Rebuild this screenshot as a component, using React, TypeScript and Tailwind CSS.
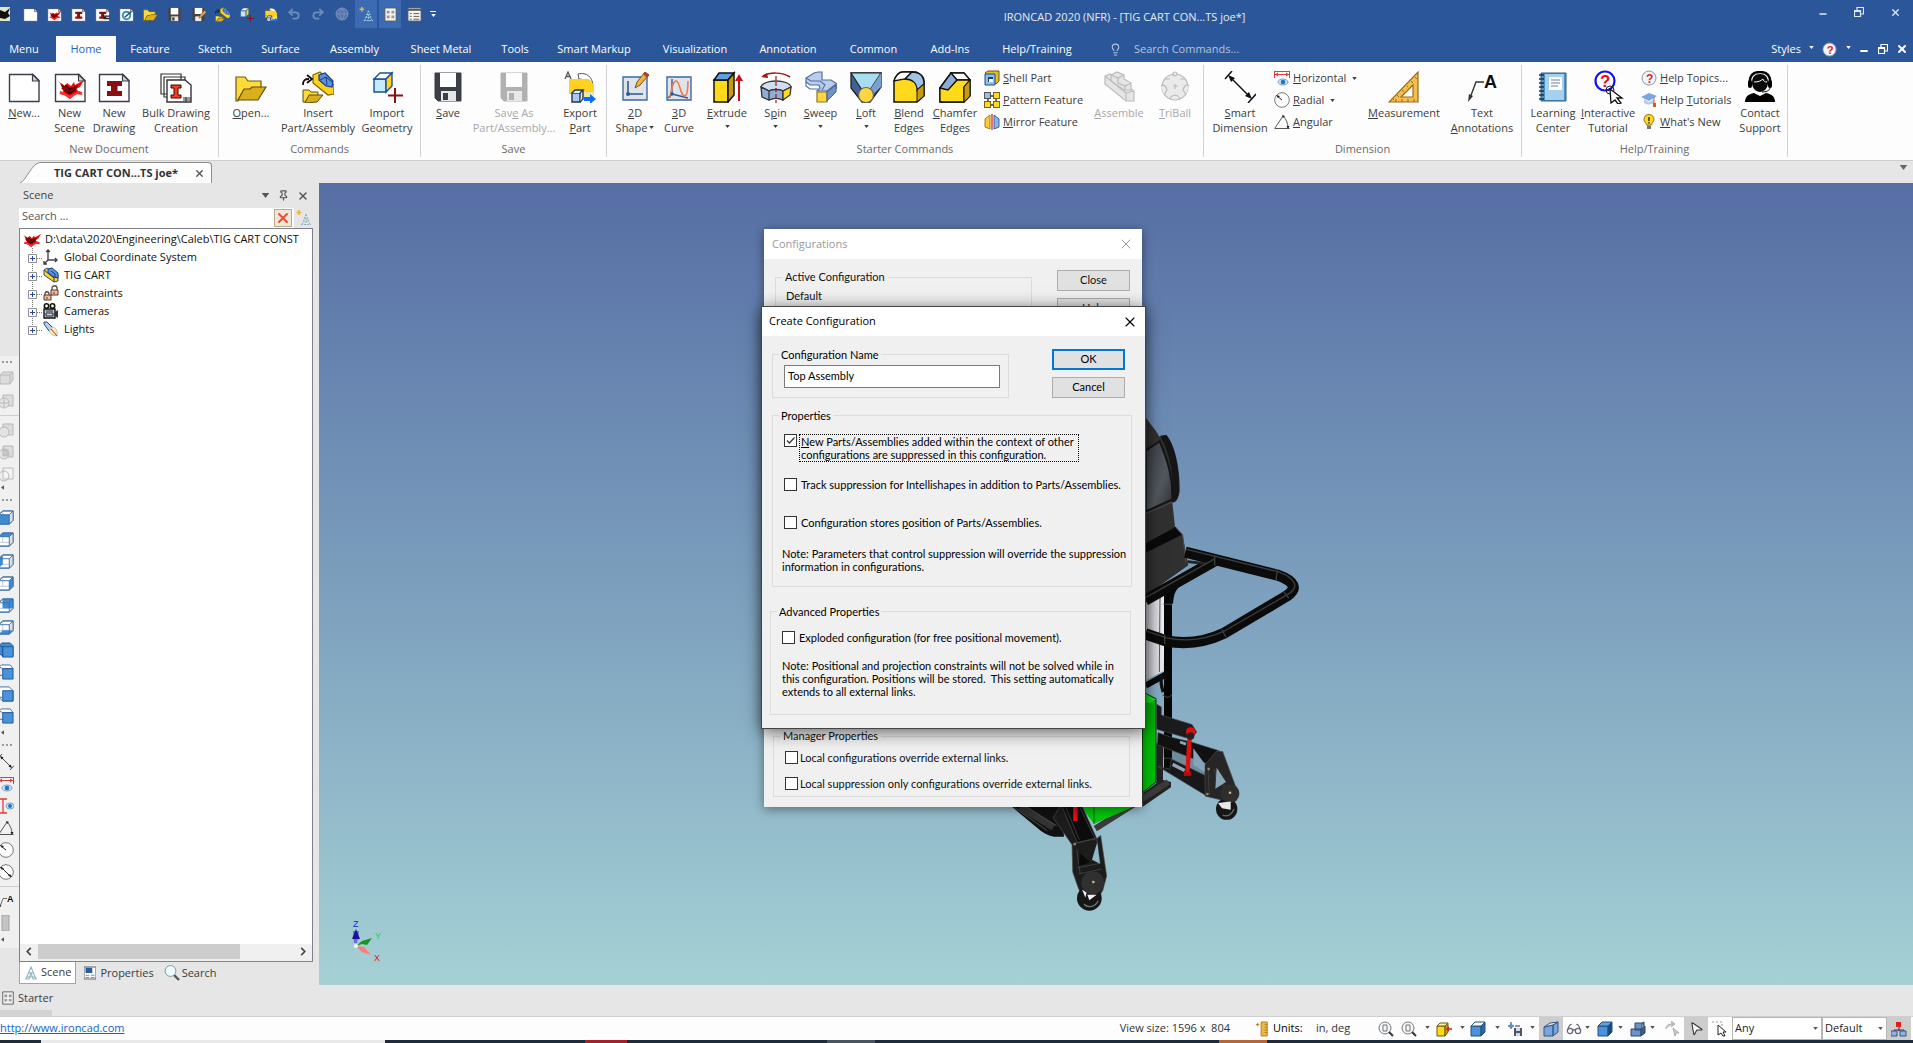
import React from 'react';
import { Lightbulb, X, Minus, Undo2, Redo2, Globe, Pin, MousePointer2, Glasses } from 'lucide-react';
import { clsx } from 'clsx';

// "&" in front of a letter marks the keyboard mnemonic
function Mnemonic({ text }: { text: string }) {
  const at = text.indexOf('&');
  if (at < 0) return <>{text}</>;
  return (
    <>
      {text.slice(0, at)}
      <u>{text[at + 1]}</u>
      {text.slice(at + 2)}
    </>
  );
}

function Caret({ className }: { className?: string }) {
  return (
    <svg viewBox="0 0 6 4" className={clsx('inline-block h-[3px] w-[5px] shrink-0', className)} aria-hidden="true">
      <path d="M0 0h6L3 4z" fill="currentColor" />
    </svg>
  );
}

function Svg({ size = 'w-8 h-8', box = 32, children }: { size?: string; box?: number; children: React.ReactNode }) {
  return (
    <svg viewBox={`0 0 ${box} ${box}`} className={clsx('shrink-0', size)} fill="none" aria-hidden="true">
      {children}
    </svg>
  );
}

type IconProps = { size?: string };

/* ---------- document icons ---------- */

const page = 'M1.5 3.5H25l6 6V30.500H1.500z';

function PageIcon({ size, children }: IconProps & { children?: React.ReactNode }) {
  return (
    <Svg size={size}>
      <path d={page} fill="#fff" stroke="#3a3f4b" strokeWidth="1.4" />
      <path d="M24.500 3.500v6.500H31z" fill="#cfd3d8" stroke="#3a3f4b" strokeWidth="1.200" />
      {children}
    </Svg>
  );
}

function SceneMark() {
  return (
    <>
      <path d="M4 10l7 5 2-3 4 3 3-4 1 3 9-5-4 7-4 2 7 6-7-1-6 5-6-4-5-1 5-3-3-3 3-1z" fill="#e81010" />
      <path d="M6 12l7 5 8-1 3-3-2 7-7 4-5-3z" fill="#8d0000" />
      <path d="M11 14l5 4 5-2M13 21l4 1 4-4" stroke="#300" strokeWidth="1.500" />
      <path d="M6 21l3 1 7 4 9-5 3 1" stroke="#ff3030" strokeWidth="2" />
    </>
  );
}

function BeamMark({ fill = '#8a0f0f' }: { fill?: string }) {
  return <path d="M9 10h15v5h-4.500v5H24v5H9v-5h4v-5H9z" fill={fill} />;
}

function BulkIcon() {
  return (
    <Svg size="w-9 h-8">
      <path d="M1 3h20v20H1zM4 6h21v20H4z" fill="#fff" stroke="#333" strokeWidth="1.200" />
      <path d="M7 9h18l6 5v17H7z" fill="#fff" stroke="#333" strokeWidth="1.400" />
      <path d="M11 14h10v3h-3v7h3v3H11v-3h3v-7h-3z" fill="#f0401e" stroke="#400" />
      <path d="M23 27h8M23 29h8M26 26v5" stroke="#333" />
    </Svg>
  );
}

function FolderIcon({ size }: IconProps) {
  return (
    <Svg size={size}>
      <path d="M1 6h9l3 4h13v9H9L3 30H1z" fill="#ffdb3a" stroke="#6b5a10" strokeWidth="1.200" />
      <path d="M9 18h6l2-2h14L23 29H3z" fill="#d9b01c" stroke="#5d4e0c" strokeWidth="1.200" />
    </Svg>
  );
}

function FloppyIcon({ size, tone = '#3b3f47' }: IconProps & { tone?: string }) {
  return (
    <Svg size={size}>
      <path d="M3 2h26v28H6l-3-3z" fill={tone} stroke={tone} />
      <path d="M8 2h16v14H8z" fill="#fff" />
      <path d="M9 20h15v10H9z" fill="#e6e6e6" />
      <path d="M11 22h5v7h-5z" fill={tone} />
    </Svg>
  );
}

function SaveEditIcon({ size }: IconProps) {
  return (
    <Svg size={size}>
      <path d="M3 2h26v28H6l-3-3z" fill="#454545" />
      <path d="M8 2h16v13H8z" fill="#fff" />
      <path d="M9 20h13v10H9z" fill="#eee" />
      <path d="M17 24l2-6L29 7l4 4-11 11z" fill="#f2a33c" stroke="#444" />
    </Svg>
  );
}

function InsertIcon({ size }: IconProps) {
  return (
    <Svg size={size}>
      <path d="M11 4l7-3 14 13v9l-6 1L11 12z" fill="#ffd21f" stroke="#7a6200" strokeWidth="1.200" />
      <path d="M17 4l6-2 8 8-1 6-6-1-7-6z" fill="#5c93dc" stroke="#123f86" strokeWidth="1.200" />
      <path d="M18 9l6-3 7 6M24 6l1 8" stroke="#123f86" />
      <path d="M1 14c0-5 2-6 6-6M5 4l5 4-5 4" stroke="#111" strokeWidth="1.800" />
      <path d="M1 19h6l2 2h7v4H7l-4 6H1z" fill="#ffdb3a" stroke="#5d4e0c" />
      <path d="M7 24h14l-6 7-12 1z" fill="#d9b01c" stroke="#5d4e0c" />
    </Svg>
  );
}

function ImportIcon({ size }: IconProps) {
  return (
    <Svg size={size}>
      <path d="M3 8h12v13H3z" fill="#c3ecff" stroke="#1d4f9c" strokeWidth="1.400" />
      <path d="M3 8l6-6h12l-6 6z" fill="#fff" stroke="#1d4f9c" strokeWidth="1.400" />
      <path d="M15 8l6-6v13l-6 6z" fill="#ffd21f" stroke="#1d4f9c" strokeWidth="1.400" />
      <path d="M24 17v15M17 24.500h15" stroke="#8a0f0f" strokeWidth="2" />
    </Svg>
  );
}

function ExportIcon({ size }: IconProps) {
  return (
    <Svg size={size}>
      <path d="M1 8l3-7 3 7M2 5.500h4" stroke="#555" strokeWidth="1.300" />
      <path d="M14 3c9-2 14 3 15 11h-6c-1-4-3-6-8-6z" fill="#fff" stroke="#555" />
      <path d="M5 8h20l5 6v15H17V18H5z" fill="#ffd21f" />
      <path d="M5 18h12v5H5z" fill="#ffd21f" />
      <path d="M17 21h13v8H17z" fill="#f3e6a2" />
      <path d="M8 22h8v9H8z" fill="#a9c9f0" stroke="#22344f" strokeWidth="1.400" />
      <path d="M8 22l3-3h8l-3 3M16 31l3-3v-9" fill="#e2effd" stroke="#22344f" strokeWidth="1.400" />
      <path d="M20 26h6v-3l6 5-6 5v-3h-6z" fill="#0a6cff" />
    </Svg>
  );
}

/* ---------- starter command icons ---------- */

function Shape2DIcon() {
  return (
    <Svg>
      <path d="M4 6h24v23H4z" fill="#dfe3ea" stroke="#3c6a9e" strokeWidth="1.400" />
      <path d="M9 10v13h15" stroke="#2f5a94" strokeWidth="1.600" />
      <circle cx="9" cy="23" r="2" fill="#2f5a94" />
      <path d="M16 17l2-6L26 1l4 3-9 10z" fill="#f3b13c" stroke="#73502a" />
      <path d="M24 3l4 4 2-3-4-3z" fill="#a9432e" />
    </Svg>
  );
}

function Curve3DIcon() {
  return (
    <Svg>
      <path d="M4 6h24v23H4z" fill="#dfe3ea" stroke="#3c6a9e" strokeWidth="1.400" />
      <path d="M9 8v15l-4 4M9 23l16 4" stroke="#2f5a94" strokeWidth="1.400" />
      <path d="M7 27C10 7 14 6 17 17s8 12 8-7" stroke="#ef7b4d" strokeWidth="1.600" />
      <circle cx="9" cy="23" r="1.800" fill="#2f5a94" />
    </Svg>
  );
}

function ExtrudeIcon() {
  return (
    <Svg>
      <path d="M3 9h14v22H3z" fill="#ffd91a" stroke="#111" strokeWidth="1.500" />
      <path d="M3 9l5-7h15l-6 7z" fill="#5ea0e0" stroke="#111" strokeWidth="1.500" />
      <path d="M17 9l6-7v22l-6 7z" fill="#c79a10" stroke="#111" strokeWidth="1.500" />
      <path d="M28 30V8" stroke="#cc1010" strokeWidth="2" />
      <path d="M28 3l-4 7h8z" fill="#cc1010" />
    </Svg>
  );
}

function SpinIcon() {
  return (
    <Svg>
      <path d="M1 16c2-8 28-8 30 0l-8 4c-3-2-11-2-14 0z" fill="#cfdcf2" stroke="#333" strokeWidth="1.300" />
      <path d="M1 16l8 4v9l-7-3zM9 20c3-2 11-2 14 0v9c-4-2-10-2-14 0z" fill="#90add8" stroke="#333" strokeWidth="1.300" />
      <path d="M31 16l-8 4v9l7-5z" fill="#ffd91a" stroke="#333" strokeWidth="1.300" />
      <path d="M3 5c7-4 19-4 27 1" stroke="#a01717" strokeWidth="1.500" />
      <path d="M1 6l6-4 1 5z" fill="#a01717" />
      <path d="M16 5v27" stroke="#a01717" strokeWidth="1.200" strokeDasharray="4 2" />
    </Svg>
  );
}

function SweepIcon() {
  return (
    <Svg>
      <path d="M9 2l4-1h4v8h9l6 4-1 5-9 7v-5H12l3-3-1-3H5l-4-3v-4z" fill="#b9cdee" stroke="#5570a0" strokeWidth="1.200" />
      <path d="M1 11v4l4 3h8M1 7l5 3h9l5 4-3 5M31 13l-9 7" stroke="#5570a0" strokeWidth="1.200" />
      <path d="M12 21h10v10H12z" fill="#ffd540" stroke="#8a7a20" strokeWidth="1.200" />
      <path d="M22 21l9-7v7l-9 9z" fill="#6f94cc" stroke="#44608f" />
    </Svg>
  );
}

function LoftIcon() {
  return (
    <Svg>
      <path d="M1 2h30v14L20 31h-8L1 17z" fill="#3f6293" stroke="#222" strokeWidth="1.300" />
      <path d="M1 2h30l-11 17h-8z" fill="#a8dcf0" stroke="#222" strokeWidth="1.200" />
      <path d="M31 2v14l-9 8-2-5z" fill="#7aa0d0" />
      <circle cx="16" cy="24" r="7.500" fill="#ffd540" stroke="#666" strokeWidth="1.200" />
    </Svg>
  );
}

function BlendIcon() {
  return (
    <Svg>
      <path d="M1 10C3 4 6 1 10 1h13c5 2 8 5 8 9v15l-7 6H1z" fill="#ffd91a" stroke="#111" strokeWidth="1.500" />
      <path d="M1 10C3 4 6 1 10 1h9l-7 7z" fill="#fff" stroke="#111" strokeWidth="1.300" />
      <path d="M12 8l7-7c7 0 12 4 12 12l-7 6C24 12 19 8 12 8z" fill="#9fc2e6" stroke="#111" strokeWidth="1.300" />
      <path d="M24 19l7-6v12l-7 6z" fill="#c79a10" stroke="#111" />
    </Svg>
  );
}

function ChamferIcon() {
  return (
    <Svg>
      <path d="M1 17L12 2h13l6 7v16l-6 6H1z" fill="#ffd91a" stroke="#111" strokeWidth="1.500" />
      <path d="M1 17L12 2l6 7-9 9z" fill="#8eabd5" stroke="#111" strokeWidth="1.300" />
      <path d="M12 2h13l6 7H18z" fill="#fff" stroke="#111" strokeWidth="1.300" />
      <path d="M1 17l8 1 9-9h13l-6 7v15H1z" fill="#ffd91a" stroke="#111" strokeWidth="1.300" />
      <path d="M25 16l6-7v16l-6 6z" fill="#c79a10" stroke="#111" />
      <path d="M1 17L12 2l6 7-9 10z" fill="#8eabd5" stroke="#111" strokeWidth="1.300" />
    </Svg>
  );
}

function ShellIcon() {
  return (
    <Svg size="w-4 h-4" box={16}>
      <path d="M1 3l3-2h11v10l-3 3z" fill="#e6bd22" stroke="#665520" />
      <path d="M1 4h10v11H1z" fill="#8fc0ea" stroke="#1d4f7c" />
      <path d="M4 7h5v5H4z" fill="#12436e" />
      <path d="M5 9h4v3H5z" fill="#fff" />
    </Svg>
  );
}

function PatternIcon() {
  return (
    <Svg size="w-4 h-4" box={16}>
      <path d="M6 4h4M4 6v5M12 6v4M6 13h4" stroke="#333" strokeWidth="1.400" />
      <rect x=".5" y=".5" width="6" height="6" fill="#9dbbe4" stroke="#555" />
      <rect x="9.500" y=".5" width="6" height="6" fill="#ffd91a" stroke="#776510" />
      <rect x=".5" y="9.500" width="6" height="6" fill="#ffd91a" stroke="#776510" />
      <rect x="9.500" y="9.500" width="6" height="6" fill="#ffd91a" stroke="#776510" />
    </Svg>
  );
}

function MirrorIcon() {
  return (
    <Svg size="w-4 h-4" box={16}>
      <path d="M6 1L1 5v8l5 2z" fill="#ffc93a" stroke="#a77d18" />
      <path d="M10 1l5 4v8l-5 2z" fill="#8fb3e6" stroke="#3b62a0" />
      <path d="M8 0v16" stroke="#c22" strokeWidth="1.200" />
    </Svg>
  );
}

function AssembleIcon() {
  return (
    <Svg>
      <g fill="#e3e3e3" stroke="#b5b5b5" strokeWidth="1.200">
        <path d="M2 5l5-2 24 17v10h-8L2 13z" />
        <path d="M8 4l6-3 7 3v4l7 4v7l-7 0-13-9z" />
        <path d="M8 4l7 3 6-3M15 7v5l7 3 6-3M22 15v5M2 5l21 17v8M23 22l8-2" />
      </g>
    </Svg>
  );
}

function TriBallIcon() {
  return (
    <Svg>
      <g fill="#e9e9e9" stroke="#b5b5b5" strokeWidth="1.200">
        <circle cx="16" cy="16" r="13" />
        <circle cx="16" cy="3" r="2" />
        <path d="M5 8h6M21 8h6M2 15c3-2 5 0 6 4l-3 5M30 15c-3-2-5 0-6 4l3 5M11 28c2-5 8-5 10 0" />
        <path d="M16 13v5M14 15h5" />
      </g>
    </Svg>
  );
}

/* ---------- dimension icons ---------- */

function SmartDimIcon({ size }: IconProps) {
  return (
    <Svg size={size}>
      <path d="M6 6l20 20" stroke="#111" strokeWidth="1.500" />
      <path d="M4 4l7 3-4 4zM28 28l-7-3 4-4z" fill="#111" />
      <path d="M1 8l7-8M24 32l8-9" stroke="#111" strokeWidth="1.500" />
    </Svg>
  );
}

function Eye({ y = 12 }: { y?: number }) {
  return (
    <>
      <ellipse cx="9" cy={y} rx="5" ry="3" fill="#cfe4f5" stroke="#5580a5" strokeWidth=".7" />
      <circle cx="9" cy={y} r="2.300" fill="#1478d4" />
    </>
  );
}

function HorizontalIcon() {
  return (
    <Svg size="w-4 h-4" box={16}>
      <path d="M.5 1v7M15.500 1v7M1 4.500h14M1 1.500h14" stroke="#e03c3c" />
      <path d="M1 4.500l3-2v4zM15 4.500l-3-2v4z" fill="#e03c3c" />
      <Eye />
    </Svg>
  );
}

function VerticalIcon() {
  return (
    <Svg size="w-4 h-4" box={16}>
      <path d="M1 1h8M1 15h8M5 1v14" stroke="#e03c3c" strokeWidth="1.300" />
      <ellipse cx="12" cy="8" rx="4" ry="3" fill="#cfe4f5" stroke="#5580a5" strokeWidth=".7" />
      <circle cx="12" cy="8" r="2" fill="#1478d4" />
    </Svg>
  );
}

function RadialIcon({ full = false }: { full?: boolean }) {
  return (
    <Svg size="w-4 h-4" box={16}>
      <circle cx="8" cy="8" r="7.300" fill="#fff" stroke="#777" />
      <path d={full ? 'M3 3l10 10' : 'M3 4l5 4'} stroke="#222" />
      <path d="M2 3l4 1-2 2z" fill="#222" />
      {full && <path d="M14 13l-4-1 2-2z" fill="#222" />}
    </Svg>
  );
}

function AngularIcon() {
  return (
    <Svg size="w-4 h-4" box={16}>
      <path d="M.5 14.500h15M1 14L9 2c3 3 5 7 5 12" stroke="#555" />
      <path d="M8 1l3 1-2 2zM12.500 12h3L14 15z" fill="#222" />
    </Svg>
  );
}

function MeasureIcon() {
  return (
    <Svg>
      <path d="M30 1v30H1z" fill="#f4bf4d" stroke="#9a6b14" strokeWidth="1.200" />
      <path d="M25 14v12H13z" fill="#fff" stroke="#9a6b14" strokeWidth="1.200" />
      <path d="M27 6l2 2M23 10l2 2M19 15l1 1M14 19l2 2M9 24l2 2M5 28l1 1M8 28v3M14 28v3M20 28v3M26 28v3" stroke="#9a6b14" />
    </Svg>
  );
}

function TextNoteIcon({ size = 'w-8 h-8' }: IconProps) {
  return (
    <svg viewBox="0 0 32 32" className={clsx('shrink-0', size)} fill="none" aria-hidden="true">
      <path d="M4 27l6-16h8" stroke="#333" strokeWidth="1.400" />
      <path d="M2 31l1-8 4 2z" fill="#333" />
      <text x="18" y="17" fontSize="18" fontWeight="700" fill="#111" fontFamily="Liberation Sans, sans-serif">A</text>
    </svg>
  );
}

/* ---------- help icons ---------- */

function NotebookIcon() {
  return (
    <Svg>
      <path d="M4 2h25v28H4z" fill="#4d8fc7" stroke="#2a628f" />
      <path d="M8 3h19v26H8z" fill="#a5d0ef" />
      <path d="M12 6h13v13H12z" fill="#fff" />
      <path d="M14 9h9M14 12h9M14 15h7" stroke="#6a7f90" />
      <path d="M2 4h5M2 8h5M2 12h5M2 16h5M2 20h5M2 24h5M2 28h5" stroke="#234" strokeWidth="1.400" />
    </Svg>
  );
}

function TutorialIcon() {
  return (
    <svg viewBox="0 0 32 34" className="h-[34px] w-8 shrink-0" fill="none" aria-hidden="true">
      <circle cx="13" cy="11" r="9.500" fill="#fff" stroke="#1212e8" strokeWidth="2.200" />
      <text x="8" y="17" fontSize="17" fontWeight="700" fill="#e01010" fontFamily="Liberation Sans, sans-serif">?</text>
      <circle cx="18" cy="20" r="4" stroke="#222" />
      <path d="M18 19l12 9-5 0 4 5-3 1-3-4-4 3z" fill="#fff" stroke="#111" strokeWidth="1.300" />
    </svg>
  );
}

function QuestionIcon({ size = 'w-4 h-4' }: IconProps) {
  return (
    <svg viewBox="0 0 16 16" className={clsx('shrink-0', size)} fill="none" aria-hidden="true">
      <circle cx="8" cy="8" r="7" fill="#f0f3f8" stroke="#8a93a3" />
      <text x="5" y="12.500" fontSize="12" fontWeight="700" fill="#e02020" fontFamily="Liberation Sans, sans-serif">?</text>
    </svg>
  );
}

function CapIcon() {
  return (
    <Svg size="w-4 h-4" box={16}>
      <path d="M0 5l8-4 8 3-8 5z" fill="#7ba6e6" />
      <path d="M3 7l5 3 5-3v4c-3 2-7 2-10 0z" fill="#b9cdee" />
      <path d="M13 5v6" stroke="#e2571f" />
      <path d="M12 11h3v4h-3z" fill="#e2571f" />
    </Svg>
  );
}

function BulbIcon() {
  return (
    <Svg size="w-4 h-4" box={16}>
      <path d="M8 .5c3 0 5 2 5 5 0 2-2 3-2.500 5.500h-5C5 8.500 3 7.500 3 5.500c0-3 2-5 5-5z" fill="#ffd91a" stroke="#6b5a10" strokeWidth=".8" />
      <path d="M6 11.500h4v3.500H6z" fill="#777" />
      <path d="M8 3v4M8 8v1.500" stroke="#333" strokeWidth="1.500" />
    </Svg>
  );
}

function SupportIcon() {
  return (
    <Svg>
      <path d="M6 12C5 5 9 1 16 1s11 4 10 11" stroke="#000" strokeWidth="2.500" />
      <path d="M8 12c0-6 3-9 8-9s8 3 8 9c0 5-4 9-8 9s-8-4-8-9z" fill="#0a0a0a" />
      <path d="M10 11c4 0 7-1 9-3 0 2 2 3 4 3" stroke="#fff" />
      <rect x="4" y="9" width="4" height="8" rx="2" fill="#000" />
      <rect x="24" y="9" width="4" height="8" rx="2" fill="#000" />
      <path d="M26 16c0 4-4 5-8 5" stroke="#000" />
      <path d="M1 31c0-5 3-8 9-9l6 3 6-3c6 1 9 4 9 9z" fill="#000" />
    </Svg>
  );
}

/* ---------- ribbon ---------- */

interface CommandProps {
  label: string;
  icon: React.ReactNode;
  width: string;
  caret?: 'inline' | 'below';
  disabled?: boolean;
}

function Command({ label, icon, width, caret, disabled }: CommandProps) {
  const lines = label.split('\n');
  return (
    <button
      disabled={disabled}
      className={clsx('flex shrink-0 flex-col items-center pt-[2px] whitespace-nowrap', width, disabled ? 'text-[#a8a8a8]' : 'text-[#3c3c3c]')}
    >
      <span className={clsx('flex h-9 items-center justify-center', disabled && 'opacity-90')}>{icon}</span>
      {lines.map((line, i) => (
        <span key={line} className="leading-[15px]">
          <Mnemonic text={line} />
          {caret === 'inline' && i === lines.length - 1 && <Caret className="mb-[3px] ml-[2px]" />}
        </span>
      ))}
      {caret === 'below' && <Caret className="mt-[5px]" />}
    </button>
  );
}

function SmallCommand({ label, icon, caret }: { label: string; icon: React.ReactNode; caret?: boolean }) {
  return (
    <button className="flex h-[22px] items-center gap-[3px] whitespace-nowrap text-[#3c3c3c]">
      {icon}
      <span>
        <Mnemonic text={label} />
      </span>
      {caret && <Caret className="ml-[3px]" />}
    </button>
  );
}

function Group({ title, pad, children }: { title: string; pad: string; children: React.ReactNode }) {
  return (
    <section aria-label={title} className="my-[3px] flex shrink-0 flex-col border-r border-[#d2d2d2] pt-[2px]">
      <div className={clsx('flex h-[72px] shrink-0 items-start', pad)}>{children}</div>
      <h2 className="text-center leading-[20px] text-[#6a6a6a]">{title}</h2>
    </section>
  );
}

function Ribbon() {
  return (
    <div className="flex h-[99px] shrink-0 overflow-hidden border-b border-[#cfcfcf] bg-[#fdfdfd]">
      <Group title="New Document" pad="pr-[3px]">
        <Command width="w-12" label="&New..." icon={<PageIcon />} />
        <Command width="w-[43px]" label={'New\nScene'} icon={<PageIcon><SceneMark /></PageIcon>} />
        <Command width="w-[46px]" label={'New\nDrawing'} icon={<PageIcon><BeamMark /></PageIcon>} />
        <Command width="w-[78px]" label={'Bulk Drawing\nCreation'} icon={<BulkIcon />} />
      </Group>
      <Group title="Commands" pad="pl-[6px] pr-[5px]">
        <Command width="w-[52px]" label="&Open..." icon={<FolderIcon />} />
        <Command width="w-[82px]" label={'Insert\nPart/Assembly'} icon={<InsertIcon />} />
        <Command width="w-[56px]" label={'Import\nGeometry'} icon={<ImportIcon />} />
      </Group>
      <Group title="Save" pad="pl-[3px] pr-[2px]">
        <Command width="w-12" label="&Save" icon={<FloppyIcon />} />
        <Command width="w-[84px]" label={'Sav&e As\nPart/Assembly...'} icon={<FloppyIcon tone="#a9a9a9" />} disabled />
        <Command width="w-12" label={'Export\n&Part'} icon={<ExportIcon />} />
      </Group>
      <Group title="Starter Commands" pad="pl-[7px] pr-[1px]">
        <Command width="w-[42px]" label={'&2D\nShape'} icon={<Shape2DIcon />} caret="inline" />
        <Command width="w-[46px]" label={'&3D\nCurve'} icon={<Curve3DIcon />} />
        <Command width="w-[50px]" label="&Extrude" icon={<ExtrudeIcon />} caret="below" />
        <Command width="w-[47px]" label="S&pin" icon={<SpinIcon />} caret="below" />
        <Command width="w-[43px]" label="&Sweep" icon={<SweepIcon />} caret="below" />
        <Command width="w-12" label="&Loft" icon={<LoftIcon />} caret="below" />
        <Command width="w-[38px]" label={'&Blend\nEdges'} icon={<BlendIcon />} />
        <Command width="w-[54px]" label={'&Chamfer\nEdges'} icon={<ChamferIcon />} />
        <div className="w-[108px] pl-[2px]">
          <SmallCommand label="&Shell Part" icon={<ShellIcon />} />
          <SmallCommand label="&Pattern Feature" icon={<PatternIcon />} />
          <SmallCommand label="&Mirror Feature" icon={<MirrorIcon />} />
        </div>
        <Command width="w-[58px]" label="&Assemble" icon={<AssembleIcon />} disabled />
        <Command width="w-[54px]" label="&TriBall" icon={<TriBallIcon />} disabled />
      </Group>
      <Group title="Dimension" pad="pl-[5px] pr-1">
        <Command width="w-[62px]" label={'&Smart\nDimension'} icon={<SmartDimIcon />} />
        <div className="w-[90px] pl-[3px]">
          <SmallCommand label="&Horizontal" icon={<HorizontalIcon />} caret />
          <SmallCommand label="&Radial" icon={<RadialIcon />} caret />
          <SmallCommand label="&Angular" icon={<AngularIcon />} />
        </div>
        <Command width="w-[86px]" label="&Measurement" icon={<MeasureIcon />} />
        <Command width="w-[70px]" label={'Text\n&Annotations'} icon={<TextNoteIcon />} />
      </Group>
      <Group title="Help/Training" pad="pl-[5px]">
        <Command width="w-[52px]" label={'Learning\nCenter'} icon={<NotebookIcon />} />
        <Command width="w-[58px]" label={'&Interactive\nTutorial'} icon={<TutorialIcon />} />
        <div className="w-[96px] pl-[4px]">
          <SmallCommand label="&Help Topics..." icon={<QuestionIcon />} />
          <SmallCommand label="Help &Tutorials" icon={<CapIcon />} />
          <SmallCommand label="&What's New" icon={<BulbIcon />} />
        </div>
        <Command width="w-[54px]" label={'Contact\nSupport'} icon={<SupportIcon />} />
      </Group>
    </div>
  );
}

/* ---------- title bar and menu ---------- */

const q = 'w-[15px] h-[15px]';

function TreeStarIcon({ size, tone = '#a5d3dd' }: IconProps & { tone?: string }) {
  return (
    <Svg size={size} box={16}>
      <path d="M3 0v5M.5 2.500h5" stroke="#e8b53c" strokeWidth="1.600" />
      <path d="M10 4L6 15M10 4l4 11M10 8v7M8 8h4M5 14.500h10M7 11h6" stroke={tone} strokeDasharray="2 1" />
    </Svg>
  );
}

function PanelIcon({ size }: IconProps) {
  return (
    <Svg size={size} box={16}>
      <path d="M2 1h12v14H2z" fill="#f4f4f4" stroke="#555" />
      <path d="M4 4h3v3H4zM9 4h3v3H9zM4 9h3v3H4zM9 9h3v3H9z" fill="#999" />
    </Svg>
  );
}

function ListIcon({ size }: IconProps) {
  return (
    <Svg size={size} box={16}>
      <path d="M1 1h14v14H1z" fill="#f4f4f4" stroke="#555" />
      <path d="M1 3h14" stroke="#555" strokeWidth="2" />
      <path d="M3 7h2M3 10h2M3 13h2M7 7h6M7 10h6M7 13h6" stroke="#555" />
    </Svg>
  );
}

const quickAccess: { name: string; icon: React.ReactNode; on?: boolean }[] = [
  { name: 'New', icon: <PageIcon size={q} /> },
  { name: 'New Scene', icon: <PageIcon size={q}><SceneMark /></PageIcon> },
  { name: 'New Drawing', icon: <PageIcon size={q}><BeamMark /></PageIcon> },
  { name: 'Bulk Drawing', icon: <PageIcon size={q}><BeamMark /><path d="M18 18h13v3H18zm0 5h13v3H18z" fill="#222" /></PageIcon> },
  { name: 'New Part', icon: <PageIcon size={q}><circle cx="16" cy="18" r="8" stroke="#2196c9" strokeWidth="4" /><path d="M12 22L26 10" stroke="#345" strokeWidth="3" /></PageIcon> },
  { name: 'Open', icon: <FolderIcon size={q} /> },
  { name: 'Save', icon: <FloppyIcon size={q} tone="#454545" /> },
  { name: 'Save As', icon: <SaveEditIcon size={q} /> },
  { name: 'Insert', icon: <InsertIcon size={q} /> },
  { name: 'Import', icon: <ImportIcon size={q} /> },
  { name: 'Export', icon: <ExportIcon size={q} /> },
  { name: 'Undo', icon: <Undo2 className="h-[14px] w-[14px] text-[#6f8dbd]" strokeWidth={3} /> },
  { name: 'Redo', icon: <Redo2 className="h-[14px] w-[14px] text-[#6f8dbd]" strokeWidth={3} /> },
  { name: 'Web', icon: <Globe className="h-[14px] w-[14px] fill-[#5573a6] text-[#6f8dbd]" /> },
  { name: 'Scene Browser', icon: <TreeStarIcon size={q} />, on: true },
  { name: 'Catalog Browser', icon: <PanelIcon size={q} />, on: true },
  { name: 'Properties', icon: <ListIcon size={q} /> },
];

function RestoreIcon() {
  return (
    <Svg size="w-[10px] h-[10px]" box={10}>
      <path d="M3 3V.5h6.500V7H7M.5 3.500h6v6h-6zM.5 4.500h6" stroke="currentColor" strokeWidth="1.200" />
    </Svg>
  );
}

function TitleBar() {
  return (
    <header className="flex h-[34px] shrink-0 items-start overflow-hidden text-white">
      <div className="flex h-7 items-center">
        <span className="flex w-[18px] items-center">
          <svg viewBox="0 0 10 14" className="h-[14px] w-[10px]" aria-hidden="true">
            <path d="M0 0h10v14H0z" fill="#e4e6c8" />
            <path d="M0 3l5 2 5-4-2 5 2 3-5 3-5-1z" fill="#111" />
          </svg>
        </span>
        {quickAccess.map((item) => (
          <button
            key={item.name}
            aria-label={item.name}
            className={clsx('flex h-7 w-6 items-center justify-center', item.on && 'border-x border-[#2b579a] bg-[#3c6ab3]')}
          >
            {item.icon}
          </button>
        ))}
        <button aria-label="Customize" className="ml-[4px] flex flex-col items-center gap-[2px]">
          <span className="h-px w-[6px] bg-white" />
          <Caret />
        </button>
      </div>
      <h1 className="flex-1 text-center leading-[34px] whitespace-nowrap text-[#e4eaf4]">IRONCAD 2020 (NFR) - [TIG CART CON...TS joe*]</h1>
      <div className="flex h-6 w-[100px] items-center gap-[26px] pl-[5px] text-[#dfe6f1]">
        <button aria-label="Minimize"><Minus className="h-[10px] w-[10px] translate-y-[2px]" strokeWidth={4} /></button>
        <button aria-label="Restore"><RestoreIcon /></button>
        <button aria-label="Close"><X className="h-[11px] w-[11px]" strokeWidth={3} /></button>
      </div>
    </header>
  );
}

const tabs = [
  { name: 'Menu', width: 'w-12 mr-2' },
  { name: 'Home', width: 'w-[60px]' },
  { name: 'Feature', width: 'w-[68px]' },
  { name: 'Sketch', width: 'w-[62px]' },
  { name: 'Surface', width: 'w-[69px]' },
  { name: 'Assembly', width: 'w-[79px]' },
  { name: 'Sheet Metal', width: 'w-[94px]' },
  { name: 'Tools', width: 'w-[54px]' },
  { name: 'Smart Markup', width: 'w-[104px]' },
  { name: 'Visualization', width: 'w-[98px]' },
  { name: 'Annotation', width: 'w-[88px]' },
  { name: 'Common', width: 'w-[83px]' },
  { name: 'Add-Ins', width: 'w-[70px]' },
  { name: 'Help/Training', width: 'w-[104px]' },
];

function MenuBar() {
  return (
    <nav className="flex h-7 shrink-0 items-end overflow-hidden text-white">
      {tabs.map((tab) => (
        <button
          key={tab.name}
          className={clsx('h-[26px] shrink-0 whitespace-nowrap', tab.width, tab.name === 'Home' && 'bg-[#fdfdfd] text-[#1a67c9]')}
        >
          {tab.name}
        </button>
      ))}
      <label className="flex h-[26px] flex-1 items-center gap-3 pl-5">
        <Lightbulb className="h-[13px] w-[13px] shrink-0 text-[#b9c8e0]" />
        <input
          type="text"
          aria-label="Search Commands"
          placeholder="Search Commands..."
          className="w-40 bg-transparent text-white outline-none placeholder:text-[#b3c3dd]"
        />
      </label>
      <div className="flex h-[26px] shrink-0 items-center pr-[5px]">
        <button className="flex items-center gap-2">
          Styles
          <Caret className="mb-1" />
        </button>
        <button aria-label="Help" className="ml-[8px] flex items-center gap-[9px]">
          <QuestionIcon size="w-[15px] h-[15px]" />
          <Caret className="mb-1" />
        </button>
        <button aria-label="Minimize document" className="ml-[8px]"><Minus className="h-[10px] w-[10px] translate-y-[2px]" strokeWidth={5} /></button>
        <button aria-label="Restore document" className="ml-[9px]"><RestoreIcon /></button>
        <button aria-label="Close document" className="ml-[8px]"><X className="h-[12px] w-[12px]" strokeWidth={4} /></button>
      </div>
    </nav>
  );
}

function DocumentTabs() {
  return (
    <div className="flex h-[22px] shrink-0 items-end justify-between overflow-hidden pr-[5px] pl-[20px]">
      <div className="flex h-[21px] items-end">
        <svg viewBox="0 0 20 21" className="h-[21px] w-5" aria-hidden="true">
          <path d="M0 21C6 19 12 1 20 .5V21z" fill="#fdfdfd" />
          <path d="M0 21C6 19 12 1 20 .5" fill="none" stroke="#8e8e8e" />
        </svg>
        <div className="flex h-[21px] items-center gap-4 rounded-tr border-t border-r border-[#8e8e8e] bg-[#fdfdfd] pr-[6px] pl-[14px]">
          <span className="font-bold whitespace-nowrap text-[#333]">TIG CART CON...TS joe*</span>
          <button aria-label="Close tab"><X className="h-[11px] w-[11px] text-[#555]" strokeWidth={3} /></button>
        </div>
      </div>
      <button aria-label="Document list" className="mb-2 text-[#666]">
        <Caret className="h-[5px]! w-[9px]!" />
      </button>
    </div>
  );
}

/* ---------- left tool strip ---------- */

const faces: Record<string, string> = {
  front: 'M1 5h11v10H1z',
  top: 'M1 5l4-4h11l-4 4z',
  left: 'M1 5l4-4v10l-4 4z',
  right: 'M12 5l4-4v10l-4 4z',
  back: 'M5 1h11v10H5z',
  bottom: 'M1 15l4-4h11l-4 4z',
};

function ViewCube({ face }: { face: string }) {
  return (
    <Svg size="w-4 h-4" box={17}>
      <path d="M1 5l4-4h11v10l-4 4H1z" fill="#fff" stroke="#3c6ea8" />
      <path d="M5 1v10H1M5 11h11" stroke="#b5c8dd" />
      <path d="M12 5l4-4v10l-4 4z" fill="#e1e1e1" />
      <path d={faces[face]} fill="#3f8ad3" />
      <path d="M1 5l4-4h11v10l-4 4H1zM1 5h11v10M12 5l4-4" stroke="#3c6ea8" />
    </Svg>
  );
}

function IsoCube({ variant }: { variant: number }) {
  return (
    <Svg size="w-4 h-4" box={17}>
      {variant === 0 && <path d="M1 4l3-3h9l3 3v11H5l-4-3z" fill="#3f8ad3" stroke="#1f5a98" />}
      {variant > 0 && (
        <>
          <path d={variant === 2 ? 'M1 1h11l4 4v11H5l-4-4z' : 'M1 3l3-2h9l3 4H5z'} fill="#fff" stroke="#3c6ea8" />
          <path d="M1 12h5" stroke="#3c6ea8" />
        </>
      )}
      <path d="M5 5h11v11H5z" fill="#4a93da" stroke="#1f5a98" />
      {variant === 0 && <path d="M1 4l4 1M5 5v11" stroke="#1f5a98" />}
    </Svg>
  );
}

function GhostIcon({ kind }: { kind: number }) {
  return (
    <Svg size="w-4 h-4" box={16}>
      <g stroke="#b9b9b9">
        {kind === 0 ? (
          <path d="M2 4l3-3h10v8l-3 4H2zM2 4h10v9M12 4l3-3" fill="#dcdcdc" />
        ) : (
          <>
            <path d="M5 2h10v11H5z" fill={kind === 4 ? '#f4f4f4' : '#dcdcdc'} />
            <circle cx="6" cy="10" r="5" fill={kind === 4 ? 'none' : '#e4e4e4'} />
            {kind === 3 && <path d="M5 6h5v6H5z" fill="#c6c6c6" />}
            {kind === 1 && <path d="M6 5v10M2 10h8" />}
          </>
        )}
      </g>
    </Svg>
  );
}

function Grip({ height }: { height: string }) {
  return (
    <div className={clsx('flex items-center gap-[2px] pl-[2px]', height)}>
      <i className="h-[2px] w-[2px] bg-[#9a9a9a]" />
      <i className="h-[2px] w-[2px] bg-[#9a9a9a]" />
      <i className="h-[2px] w-[2px] bg-[#9a9a9a]" />
    </div>
  );
}

function Tool({ name, children }: { name: string; children: React.ReactNode }) {
  return (
    <button aria-label={name} className="-ml-[2px] flex h-[22px] w-4 items-center">
      {children}
    </button>
  );
}

function ToolStrip() {
  return (
    <aside className="flex w-[19px] shrink-0 flex-col justify-end overflow-hidden pb-[37px]">
      <div className="bg-[#f0f0f0]">
        <Grip height="h-3" />
        <Tool name="Part"><GhostIcon kind={0} /></Tool>
        <Tool name="Boolean"><GhostIcon kind={1} /></Tool>
        <div className="my-[3px] h-px bg-[#cdcdcd]" />
        <Tool name="Union"><GhostIcon kind={2} /></Tool>
        <Tool name="Intersect"><GhostIcon kind={3} /></Tool>
        <Tool name="Subtract"><GhostIcon kind={4} /></Tool>
        <Caret className="mt-px mb-[3px] block! rotate-90 text-[#555]" />
        <Grip height="h-[15px]" />
        {Object.keys(faces).map((face) => (
          <Tool key={face} name={`View ${face}`}><ViewCube face={face} /></Tool>
        ))}
        {[0, 1, 2, 3].map((v) => (
          <Tool key={v} name={`Isometric ${v + 1}`}><IsoCube variant={v} /></Tool>
        ))}
        <Caret className="mt-1 mb-[5px] block! rotate-90 text-[#555]" />
        <Grip height="h-3" />
        <Tool name="Smart dimension"><SmartDimIcon size="w-4 h-4" /></Tool>
        <Tool name="Horizontal"><HorizontalIcon /></Tool>
        <Tool name="Vertical"><VerticalIcon /></Tool>
        <Tool name="Angular"><AngularIcon /></Tool>
        <Tool name="Radius"><RadialIcon /></Tool>
        <Tool name="Diameter"><RadialIcon full /></Tool>
        <div className="my-[3px] h-px bg-[#cdcdcd]" />
        <Tool name="Text"><TextNoteIcon size="w-4 h-4" /></Tool>
        <Tool name="Table">
          <Svg size="w-4 h-4" box={16}><path d="M4 0h7v16H4z" fill="#c4c4c4" stroke="#a2a2a2" /></Svg>
        </Tool>
        <Caret className="mt-1 mb-[7px] block! rotate-90 text-[#555]" />
      </div>
    </aside>
  );
}

/* ---------- scene browser ---------- */

const treeItems = [
  {
    name: 'Global Coordinate System',
    icon: <path d="M5 2v9h9M5 11l-4 4M3 3l2-2 2 2M12 9l2 2-2 2M1 12v3h3" stroke="#444" strokeWidth="1.400" />,
  },
  {
    name: 'TIG CART',
    icon: (
      <>
        <path d="M1 3l3-2 11 7v6l-4 1L1 8z" fill="#ffd21f" stroke="#33507f" />
        <path d="M5 2l4-1 6 5v5l-4-1-6-4z" fill="#5c93dc" stroke="#123f86" />
        <path d="M1 3l10 8v4M8 4l4 3v4" stroke="#123f86" />
      </>
    ),
  },
  {
    name: 'Constraints',
    icon: (
      <>
        <path d="M9 5V3c0-3 5-3 5 0v2M2 10V9c0-3 4-3 4 0v1" stroke="#5d4a44" strokeWidth="1.300" />
        <path d="M8 5h7v5H8zM1 10h7v5H1z" fill="#f3bd98" stroke="#4c3a36" />
        <path d="M11 7v2M4 12v2" stroke="#4c3a36" />
      </>
    ),
  },
  {
    name: 'Cameras',
    icon: (
      <>
        <circle cx="3.500" cy="3" r="2.200" fill="#fff" stroke="#111" strokeWidth="1.600" />
        <circle cx="9.500" cy="3" r="2.200" fill="#fff" stroke="#111" strokeWidth="1.600" />
        <path d="M1 6h11v9H1z" fill="#c9cfda" stroke="#111" strokeWidth="1.400" />
        <path d="M3 8h7M3 10h7v3H3z" stroke="#223" />
        <path d="M15 7v8l-3-2V9z" fill="#333" />
      </>
    ),
  },
  {
    name: 'Lights',
    icon: (
      <>
        <path d="M1 1l3 0 6 6-4 3-5-7z" fill="#b9cdee" stroke="#274a8a" />
        <path d="M9 6c4 0 6 4 5 9-4 0-7-2-8-5z" fill="#f6f0b8" stroke="#aaa" strokeWidth=".7" />
        <path d="M8 8l6 7" stroke="#d22" />
      </>
    ),
  },
];

function SceneTree() {
  return (
    <ul className="flex-1 overflow-hidden pt-px text-[#111]">
      <li>
        <div className="flex h-[18px] items-center gap-[4px] pl-[3px] whitespace-nowrap">
          <svg viewBox="4 7 26 20" className="h-[15px] w-[18px] shrink-0" fill="none" aria-hidden="true"><SceneMark /></svg>
          <span>D:\data\2020\Engineering\Caleb\TIG CART CONST</span>
        </div>
        <ul>
          {treeItems.map((item, i) => (
            <li key={item.name} className="flex h-[18px] items-center pl-2 whitespace-nowrap">
              <button aria-label={`Expand ${item.name}`}>
                <svg viewBox="0 0 15 18" className="h-[18px] w-[15px]" fill="none" aria-hidden="true">
                  <path d={i < 4 ? 'M4.500 0v18' : 'M4.500 0v9'} stroke="#777" strokeDasharray="1 1" />
                  <path d="M9 10.500h6" stroke="#777" strokeDasharray="1 1" />
                  <path d="M.5 6.500h8v8h-8z" fill="#fff" stroke="#919191" />
                  <path d="M2 10.500h5M4.500 8v5" stroke="#2c4a9a" />
                </svg>
              </button>
              <Svg size="w-4 h-4" box={16}>{item.icon}</Svg>
              <span className="ml-[5px]">{item.name}</span>
            </li>
          ))}
        </ul>
      </li>
    </ul>
  );
}

function SceneTabIcon() {
  return (
    <Svg size="w-[14px] h-[14px]" box={14}>
      <path d="M7 1L2 13h3l2-6 2 6h3zM4.500 7h5M3 11h8" stroke="#8fb5bd" strokeWidth="1.100" />
    </Svg>
  );
}

function ScenePanel() {
  return (
    <aside className="flex w-[294px] shrink-0 flex-col">
      <div className="flex h-[25px] shrink-0 items-center justify-between pr-[4px] pl-1 text-[#444]">
        <h2>Scene</h2>
        <div className="flex items-center gap-[8px] text-[#555]">
          <button aria-label="Panel options" className="flex"><Caret className="h-[5px]! w-[9px]!" /></button>
          <button aria-label="Auto hide"><Pin className="h-[11px] w-[11px]" strokeWidth={2.5} /></button>
          <button aria-label="Close panel"><X className="h-[12px] w-[12px]" strokeWidth={3} /></button>
        </div>
      </div>
      <div className="flex h-5 shrink-0 items-center gap-[2px] bg-white pl-[3px]">
        <input type="text" aria-label="Search scene" placeholder="Search ..." className="min-w-0 flex-1 pb-[3px] outline-none placeholder:text-[#555]" />
        <button aria-label="Clear search" className="flex h-[18px] w-[18px] items-center justify-center border border-[#b5ad90] bg-[#ece7d6]">
          <X className="h-4 w-4 text-[#f04a32]" strokeWidth={3} />
        </button>
        <button aria-label="Filter" className="flex h-5 w-[19px] items-center justify-center bg-[#e6e6e6]">
          <TreeStarIcon size="w-4 h-4" tone="#8fb5bd" />
        </button>
      </div>
      <div className="flex min-h-0 flex-1 flex-col border border-[#7f7f8e] bg-white">
        <SceneTree />
        <div className="flex h-[17px] shrink-0 items-start bg-[#f0f0f0]">
          <button aria-label="Scroll left" className="flex h-[15px] w-[18px] items-center justify-center">
            <svg viewBox="0 0 6 10" className="h-[9px] w-[6px]" fill="none"><path d="M5 1L1 5l4 4" stroke="#444" strokeWidth="1.800" /></svg>
          </button>
          <div className="h-[15px] flex-1"><div className="h-full w-[79%] bg-[#cdcdcd]" /></div>
          <button aria-label="Scroll right" className="flex h-[15px] w-[18px] items-center justify-center">
            <svg viewBox="0 0 6 10" className="h-[9px] w-[6px]" fill="none"><path d="M1 1l4 4-4 4" stroke="#444" strokeWidth="1.800" /></svg>
          </button>
        </div>
      </div>
      <div className="flex h-[23px] shrink-0 items-start text-[#3c3c3c]">
        <button className="flex h-[22px] items-center gap-[3px] border border-t-0 border-[#a5a5a5] bg-white pr-[4px] pl-[4px]">
          <SceneTabIcon />
          Scene
        </button>
        <button className="flex h-[22px] items-center gap-1 pl-2">
          <Svg size="w-[12px] h-4" box={16}>
            <path d="M0 0h16v16H0z" fill="#fff" stroke="#666" strokeWidth="1.500" />
            <path d="M2 1h9v7H2z" fill="#2a5c9a" />
            <path d="M2 11h5M9 11h5M2 14h5M9 14h5" stroke="#666" />
          </Svg>
          Properties
        </button>
        <button className="flex h-[22px] items-center gap-[2px] pl-[10px]">
          <SearchGlass />
          Search
        </button>
      </div>
    </aside>
  );
}

function SearchGlass() {
  return (
    <Svg size="w-4 h-4" box={16}>
      <path d="M10 10l5 5" stroke="#555" strokeWidth="2.400" />
      <circle cx="6.500" cy="6" r="5.400" fill="#eefcff" stroke="#7c9aa5" />
    </Svg>
  );
}

/* ---------- 3D view ---------- */

function Cart() {
  return (
    <svg
      viewBox="0 0 960 1568"
      preserveAspectRatio="none"
      className="absolute top-[217px] left-[681px] h-[530px] w-[320px]"
      fill="none"
      aria-label="TIG cart model"
    >
      <defs>
        <linearGradient id="visor" x1="0" y1="0" x2="1" y2="1">
          <stop offset="0" stopColor="#3a3d42" />
          <stop offset=".6" stopColor="#53585f" />
          <stop offset="1" stopColor="#2c2e33" />
        </linearGradient>
        <linearGradient id="panel" x1="0" y1="0" x2="1" y2="0">
          <stop offset="0" stopColor="#b8bac2" />
          <stop offset="1" stopColor="#f3f3f7" />
        </linearGradient>
      </defs>
      {/* post and back panel */}
      <path d="M437 600l58-28-4 230-54 26z" fill="url(#panel)" />
      <path d="M480 580l-2 225" stroke="#555" strokeWidth="3" />
      <path d="M504 560v535" stroke="#060606" strokeWidth="24" />
      <path d="M530 550c-14 16-16 30-18 52" stroke="#0a0a0a" strokeWidth="14" />
      <path d="M437 845l70-38" stroke="#0a0a0a" strokeWidth="18" />
      <path d="M486 812c-6 20-2 36 4 52" stroke="#111" strokeWidth="10" />
      <path d="M488 872c8 10 20 10 28 0M490 604h26M492 1060h24" stroke="#4a4a4a" strokeWidth="3" />
      {/* hood */}
      <path d="M437 52l34 44 6 12 22-5c26 30 42 100 40 168-4 24-12 34-22 32l8 72 22 22 18 92-128 90z" fill="#303030" />
      <path d="M499 104c26 30 40 100 38 168-4 22-12 32-22 30 8-70-2-136-34-196z" fill="#151515" />
      <path d="M437 150l42-28c26 60 40 110 38 172l-80 36z" fill="url(#visor)" stroke="#141414" strokeWidth="6" />
      <path d="M437 424l90-48 20 22-110 54z" fill="#0a0a0a" />
      <path d="M437 336l80-34M528 378l20 22 10 84" stroke="#4b4b4b" strokeWidth="3" />
      {/* push handle */}
      <g stroke="#0b0b0b" strokeWidth="33" strokeLinejoin="round">
        <path d="M556 450l276 68c52 18 62 40 28 62L672 690c-56 26-116 34-176 22l-60-20" />
        <path d="M436 592l208-116" />
      </g>
      <path d="M562 478l56 6" stroke="#222" strokeWidth="8" />
      <g stroke="#3d3d3d" strokeWidth="4">
        <path d="M560 442l274 66c54 20 66 46 28 68L676 682c-56 26-116 34-176 22l-60-20" />
        <path d="M438 584l206-114M644 460v30M832 504l-4 28M850 566l16 20M666 680l12 22M494 694v28" />
      </g>
      {/* green box and base */}
      <path d="M427 1164l42-30v-120h20v110l24 6v16l-86 58z" fill="#222" />
      <path d="M427 880l10-12 31 16v246l-41 32z" fill="#00b808" stroke="#063b06" strokeWidth="3" />
      <path d="M437 870l31 16-20 12-11-6z" fill="#14e61c" />
      <path d="M286 1268l141-88 78-50" stroke="#3a3a3a" strokeWidth="18" />
      <path d="M240 1200h170l-128 54z" fill="#00c40a" />
      <path d="M282 1200v54" stroke="#04600a" strokeWidth="3" />
      {/* right leg */}
      <path d="M480 1000l140 70 8 90-130-66z" fill="#0f1214" opacity=".25" />
      <g stroke="#4a4a4a" strokeWidth="2">
        <path d="M470 900l14 8v24l92 28 14 22-16 22-104-30z" fill="#1b1b1b" />
        <path d="M474 984l40 14 60 14 84 26 12 22-24 26-174-66z" fill="#111" />
        <path d="M474 1084l150 90 14-24-20-38-104-50-4 30z" fill="#181818" />
        <path d="M648 1040h20l48 128-14 24-86-20-2-92z" fill="#262626" />
        <path d="M644 1092l4 30 20 18 24 6M624 1084l4 84" />
      </g>
      <path d="M650 1088l-4 62 32-20z" fill="#8aa7b8" />
      <path d="M580 1030l34 46v24l-34-20z" fill="#86a3ba" />
      <path d="M540 1012l18 6" stroke="#8fa6b8" strokeWidth="8" />
      <path d="M518 1078l36 18" stroke="#8fa6b8" strokeWidth="10" />
      <path d="M570 978l-8 130" stroke="#e01010" strokeWidth="13" />
      <circle cx="572" cy="982" r="14" fill="#e01010" />
      <path d="M552 1106h22" stroke="#b50c0c" strokeWidth="12" />
      <circle cx="572" cy="994" r="11" fill="#222" />
      <circle cx="680" cy="1210" r="32" fill="#161616" />
      <circle cx="690" cy="1164" r="28" fill="#2e2e2e" />
      <path d="M654 1192l38-4v24l-26-4z" fill="#e9e9e9" />
      <path d="M668 1228c14 6 28-2 34-18" stroke="#666" strokeWidth="4" />
      <circle cx="690" cy="1162" r="4" fill="#c9bd7a" />
      <circle cx="626" cy="1092" r="4" fill="#8d8560" />
      <circle cx="622" cy="1166" r="4" fill="#8d8560" />
      {/* front leg */}
      <path d="M34 1202h152l6 90h-30c-20-4-36-14-50-26z" fill="#111" />
      <path d="M60 1204l100 60" stroke="#333" strokeWidth="20" />
      <path d="M44 1206l98 68M80 1204l90 56" stroke="#484848" strokeWidth="3" />
      <g stroke="#505050" strokeWidth="2">
        <path d="M160 1236l20-34h66l44 96 12-10 18 120-12 44-14 20-50-6-12-30-14-40-2-80z" fill="#1c1c1c" />
        <path d="M186 1202h60l44 96-58 12z" fill="#0c0c0c" />
        <path d="M196 1202l42 100M240 1206l44 90" />
        <path d="M222 1312l66-16M230 1330l10 70M290 1300l10 70M232 1384l70-14M236 1402l68-14" />
      </g>
      <path d="M292 1310l8 62-24-12 12-40z" fill="#90b8c6" />
      <path d="M240 1340l30 28-34 10z" fill="#0a0a0a" />
      <path d="M226 1204v42" stroke="#e01010" strokeWidth="13" />
      <circle cx="268" cy="1474" r="37" fill="#161616" />
      <circle cx="278" cy="1428" r="34" fill="#303030" />
      <path d="M246 1448l14 10-4 14zM262 1464h28l-22 16z" fill="#efefef" />
      <path d="M252 1492c12 12 34 8 42-10" stroke="#777" strokeWidth="4" />
      <circle cx="280" cy="1426" r="4" fill="#c9bd7a" />
      <circle cx="224" cy="1314" r="4" fill="#8d8560" />
    </svg>
  );
}

function Triad() {
  return (
    <svg viewBox="0 0 42 46" className="absolute bottom-[20px] left-[25px] h-[46px] w-[42px]" aria-label="Axes">
      <path d="M10 24L9 12h6l-2 12" fill="#6a6ae0" />
      <path d="M12 10l4 10H8z" fill="#14149a" />
      <path d="M12 27l6-5 10-3-5 7-5-1z" fill="#17932a" />
      <path d="M12 27l8 1 7 8-9-3z" fill="#ff7d78" />
      <circle cx="12" cy="27" r="2" fill="#fff" />
      <g fontFamily="Liberation Sans, sans-serif" fontSize="9">
        <text x="9" y="8" fill="#1a1ae0">Z</text>
        <text x="31" y="20" fill="#21d63c">Y</text>
        <text x="30" y="42" fill="#d81818">X</text>
      </g>
    </svg>
  );
}

/* ---------- dialogs ---------- */

function Check({ id, label, checked, focus, gap = 'gap-[4px]' }: { id: string; label: string; checked?: boolean; focus?: boolean; gap?: string }) {
  return (
    <div className={clsx('flex items-start', focus ? 'gap-[2px]' : gap)}>
      <span className="relative flex h-[13px] w-[13px] shrink-0">
        <input
          id={id}
          type="checkbox"
          defaultChecked={checked}
          className="peer h-[13px] w-[13px] appearance-none border border-[#333] bg-white"
        />
        <svg viewBox="0 0 13 13" className="pointer-events-none absolute inset-0 hidden peer-checked:block" fill="none">
          <path d="M3 6.500L5.500 9 10.500 3.500" stroke="#333" strokeWidth="1.300" />
        </svg>
      </span>
      <label htmlFor={id} className={clsx('whitespace-pre leading-[13px]', focus && 'border border-dotted border-black pr-[4px] pl-px')}>
        <Mnemonic text={label} />
      </label>
    </div>
  );
}

const pushButton = 'h-[21px] w-[73px] border border-[#adadad] bg-[#e1e1e1]';

function ConfigurationsDialog() {
  return (
    <div role="dialog" aria-label="Configurations" className="absolute top-[46px] left-[445px] flex h-[578px] w-[378px] flex-col bg-[#f0f0f0] font-['Lato',sans-serif] text-[#111] shadow-[0_2px_10px_rgba(0,0,0,0.45)]">
      <div className="flex h-[30px] items-center justify-between bg-white pr-[8px] pl-2 font-['Open_Sans',sans-serif] text-[#999]">
        <span>Configurations</span>
        <button aria-label="Close"><X className="h-[16px] w-[16px]" strokeWidth={1.5} /></button>
      </div>
      <div className="flex flex-1 flex-col justify-between pr-[12px] pb-[10px] pl-[9px]">
        <div className="flex items-start justify-between pt-[11px] pl-[2px]">
          <fieldset className="h-[80px] w-[257px] border border-[#dcdcdc] pl-[10px]">
            <legend className="-ml-[4px] px-[3px] leading-[14px]">Active Configuration</legend>
            <p className="mt-1 leading-4">Default</p>
          </fieldset>
          <div className="flex flex-col gap-[7px]">
            <button className={pushButton}>Close</button>
            <button className={pushButton}>Help</button>
          </div>
        </div>
        <fieldset className="border border-[#dcdcdc] pr-3 pb-[6px] pl-[11px]">
          <legend className="-ml-[5px] px-[3px] leading-[14px]">Manager Properties</legend>
          <div className="flex flex-col gap-[13px] pt-[8px]">
            <Check id="local-override" label="Local configurations override external links." gap="gap-[2px]" />
            <Check id="local-suppression" label="Local suppression only configurations override external links." gap="gap-[2px]" />
          </div>
        </fieldset>
      </div>
    </div>
  );
}

function CreateConfigurationDialog() {
  return (
    <div
      role="dialog"
      aria-label="Create Configuration"
      className="absolute top-[123px] left-[442px] w-[385px] border border-[#444] bg-[#f0f0f0] pb-[13px] font-['Lato',sans-serif] text-[11px] text-black shadow-[0_3px_16px_rgba(0,0,0,0.6)]"
    >
      <div className="flex h-[29px] items-center justify-between bg-white pr-[7px] pl-[7px] font-['Open_Sans',sans-serif]">
        <span>Create Configuration</span>
        <button aria-label="Close dialog"><X className="h-[16px] w-[16px]" strokeWidth={1.6} /></button>
      </div>
      <div className="flex items-start justify-between pt-[12px] pr-[20px] pl-[10px]">
        <fieldset className="w-[237px] border border-[#dcdcdc] pr-[8px] pb-[9px] pl-[11px]">
          <legend className="-ml-[5px] px-[2px] leading-[13px]">
            <label htmlFor="config-name">Configuration Name</label>
          </legend>
          <input id="config-name" type="text" defaultValue="Top Assembly" className="mt-[4px] block h-[23px] w-full border border-[#7a7a7a] bg-white px-[3px] pb-[3px]" />
        </fieldset>
        <div className="flex flex-col gap-[7px] pt-px">
          <button className="h-[21px] w-[73px] border-2 border-[#0078d7] bg-[#e1e1e1]">OK</button>
          <button className={pushButton}>Cancel</button>
        </div>
      </div>
      <fieldset className="mt-[11px] mr-[13px] ml-[10px] min-w-0 border border-[#dcdcdc] pr-2 pb-[13px] pl-[11px]">
        <legend className="-ml-[5px] px-[2px] leading-[13px]">Properties</legend>
        <div className="pt-[12px]">
          <Check
            id="suppress-new"
            checked
            focus
            label={'&New Parts/Assemblies added within the context of other\nconfigurations are suppressed in this configuration.'}
          />
        </div>
        <div className="flex flex-col gap-[25px] pt-[16px]">
          <Check id="track-suppression" label="Track suppression for Intellishapes in addition to Parts/Assemblies." />
          <Check id="store-position" label="Configuration stores &position of Parts/Assemblies." />
        </div>
        <p className="mt-[18px] -ml-[2px] leading-[13px] whitespace-pre">
          {'Note: Parameters that control suppression will override the suppression\ninformation in configurations.'}
        </p>
      </fieldset>
      <fieldset className="mt-[18px] mr-[14px] ml-[8px] min-w-0 border border-[#dcdcdc] pr-2 pb-[16px] pl-[11px]">
        <legend className="-ml-[5px] px-[2px] leading-[13px]">Advanced Properties</legend>
        <div className="pt-[13px]">
          <Check id="exploded" label="Exploded configuration (for free positional movement)." />
        </div>
        <p className="mt-[15px] leading-[13px] whitespace-pre">
          {'Note: Positional and projection constraints will not be solved while in\nthis configuration. Positions will be stored.  This setting automatically\nextends to all external links.'}
        </p>
      </fieldset>
    </div>
  );
}

/* ---------- status bar ---------- */

function Block({ fill = '#4a93da', side = '#2a66a8', top = '#9cc6ee' }: { fill?: string; side?: string; top?: string }) {
  return (
    <Svg size="w-4 h-4" box={16}>
      <path d="M1 5h10v10H1z" fill={fill} stroke="#24507f" />
      <path d="M1 5l4-4h10l-4 4z" fill={top} stroke="#24507f" />
      <path d="M11 5l4-4v10l-4 4z" fill={side} stroke="#24507f" />
    </Svg>
  );
}

function LookAtIcon() {
  return (
    <Svg size="w-4 h-4" box={16}>
      <path d="M1 5h8v10H1z" fill="#ffd91a" stroke="#6b5a10" />
      <path d="M1 5l3-3h8L9 5z" fill="#fff3a0" stroke="#6b5a10" />
      <path d="M9 5l3-3v9l-3 4z" fill="#c79a10" stroke="#6b5a10" />
      <path d="M16 8h-4M13 6l-2 2 2 2" stroke="#c22" strokeWidth="1.300" />
    </Svg>
  );
}

function PageGlass() {
  return (
    <Svg size="w-4 h-4" box={16}>
      <circle cx="7" cy="7" r="6" fill="#f2f6f8" stroke="#777" />
      <path d="M5 4h4v6H5z" stroke="#777" />
      <path d="M11 11l4 4" stroke="#333" strokeWidth="2" />
    </Svg>
  );
}

function StatusTool({ name, caret, on, width, children }: { name: string; caret?: boolean; on?: boolean; width: string; children: React.ReactNode }) {
  return (
    <button aria-label={name} className={clsx('flex h-[23px] shrink-0 items-center justify-between', width, on && 'bg-[#cdcdcd] px-1')}>
      {children}
      {caret && <Caret className="mb-[2px] text-[#555]" />}
    </button>
  );
}

function StatusBar() {
  return (
    <footer className="flex h-6 shrink-0 items-center justify-between border-t border-[#cfcfcf] bg-[#fdfdfd] pr-[2px] text-[#333]">
      <a href="http://www.ironcad.com" className="text-[#1464c8] underline">http://www.ironcad.com</a>
      <div className="flex items-center">
        <span className="mr-[25px] whitespace-pre">View size: 1596 x  804</span>
        <Svg size="w-[14px] h-4" box={16}>
          <path d="M7 0h7v16H7z" fill="#f2b545" stroke="#a87818" />
          <path d="M11 3h3M11 6h3M11 9h3M11 12h3M1 3h4M3 1v4" stroke="#a87818" />
        </Svg>
        <span className="ml-[4px] w-[43px] text-black">Units:</span>
        <span className="w-[62px]">in, deg</span>
        <StatusTool name="Zoom page" width="w-[23px]"><PageGlass /></StatusTool>
        <StatusTool name="Zoom window" width="w-[29px]" caret><PageGlass /></StatusTool>
        <span className="w-[6px]" />
        <StatusTool name="Look at" width="w-[29px]" caret><LookAtIcon /></StatusTool>
        <span className="w-[5px]" />
        <StatusTool name="View" width="w-[30px]" caret><Block top="#fff" /></StatusTool>
        <span className="w-[7px]" />
        <StatusTool name="Camera" width="w-[28px]" caret>
          <Svg size="w-4 h-4" box={16}>
            <path d="M4 1v7M1 5h6M8 5h5" stroke="#333" />
            <path d="M7 7h8v8H7z" fill="#556" />
            <path d="M9 7h4v3H9zM9 12h4v3H9z" fill="#cde" />
            <circle cx="4" cy="5" r="2" fill="#4a93da" />
          </Svg>
        </StatusTool>
        <span className="w-[4px]" />
        <StatusTool name="Perspective" width="w-6" on>
          <Svg size="w-4 h-4" box={16}>
            <path d="M1 6l9-2v11H1zM10 4l5-3v10l-5 4z" fill="#7ba6dd" stroke="#31588c" />
            <path d="M1 6l6-4 8-1-5 3z" fill="#dbe9f8" stroke="#31588c" />
          </Svg>
        </StatusTool>
        <span className="w-[3px]" />
        <StatusTool name="Visibility" width="w-[24px]" caret><Glasses className="h-4 w-4 text-[#667]" strokeWidth={1.8} /></StatusTool>
        <span className="w-[7px]" />
        <StatusTool name="Shading" width="w-[26px]" caret><Block side="#17497f" top="#5fa3e2" /></StatusTool>
        <span className="w-[7px]" />
        <StatusTool name="Assembly" width="w-[25px]" caret>
          <Svg size="w-4 h-4" box={16}>
            <path d="M1 8h10v7H1zM5 2h7v7H5z" fill="#6d93c6" stroke="#31466b" />
            <path d="M11 8l4-3v7l-4 3zM12 2l2-1v5" fill="#3d5d8d" stroke="#31466b" />
          </Svg>
        </StatusTool>
        <span className="w-[9px]" />
        <StatusTool name="Redo selection" width="w-5">
          <Svg size="w-4 h-4" box={16}><path d="M2 8c0-4 3-5 7-5M7 0l4 3-4 3M9 7l6 5-3 0-1 3z" fill="#ccc" stroke="#aaa" /></Svg>
        </StatusTool>
        <StatusTool name="Select" width="w-6" on><MousePointer2 className="h-4 w-4 rotate-12 fill-white text-[#333]" strokeWidth={1.6} /></StatusTool>
        <StatusTool name="Select box" width="w-[24px]">
          <Svg size="w-[24px] h-4" box={16}>
            <path d="M0 1h10v8" stroke="#999" strokeDasharray="2 2" />
            <path d="M6 4l8 7-3 0 2 4-2 0-2-3-3 2z" fill="#fff" stroke="#222" />
          </Svg>
        </StatusTool>
        <div className="relative flex items-center">
          <select aria-label="Selection filter" className="h-[23px] w-[90px] appearance-none border border-[#b5b5b5] bg-white px-[2px] text-[#222]">
            <option>Any</option>
          </select>
          <Caret className="pointer-events-none absolute right-[4px] text-[#555]" />
        </div>
        <div className="relative flex items-center">
          <select aria-label="Configuration" className="h-[23px] w-[65px] appearance-none border border-[#b5b5b5] bg-white px-[2px] text-[#222]">
            <option>Default</option>
          </select>
          <Caret className="pointer-events-none absolute right-[4px] text-[#555]" />
        </div>
        <StatusTool name="Configurations" width="w-6" on>
          <Svg size="w-4 h-4" box={16}>
            <path d="M8 6v4M3 11V9h10v2" stroke="#333" />
            <path d="M5 1h5v5H5z" fill="#e21b1b" />
            <path d="M0 10h6v5H0zM9 10h6v5H9z" fill="#8fb3e6" stroke="#31588c" />
          </Svg>
        </StatusTool>
      </div>
    </footer>
  );
}

export default function App() {
  return (
    <div className="flex h-screen min-h-[900px] flex-col overflow-hidden bg-[#e6e6e6] font-['Open_Sans',sans-serif] text-[11px]">
      <div className="shrink-0 bg-[#2b579a]">
        <TitleBar />
        <MenuBar />
      </div>
      <Ribbon />
      <DocumentTabs />
      <div className="flex min-h-0 flex-1">
        <ToolStrip />
        <ScenePanel />
        <main className="relative ml-[6px] flex-1 overflow-hidden bg-linear-to-b from-[#566ea4] to-[#a5d1d5]">
          <Cart />
          <Triad />
          <ConfigurationsDialog />
          <CreateConfigurationDialog />
        </main>
      </div>
      <div className="flex h-[31px] shrink-0 flex-col justify-between text-[#3c3c3c]">
        <button className="flex h-[25px] items-center gap-[3px] self-start pt-px pl-px">
          <PanelIcon size="w-[14px] h-[14px]" />
          Starter
        </button>
        <div className="h-[6px] w-[52px] bg-[#d3d3d3]" />
      </div>
      <StatusBar />
      <div className="flex h-[3px] shrink-0 bg-[#1f2b38]">
        <span className="ml-[41px] w-[344px] bg-[#e9e9e9]" />
        <span className="ml-[200px] w-[42px] bg-[#a5202b]" />
        <span className="ml-[200px] w-[48px] bg-[#4a545e]" />
        <span className="ml-[344px] w-[48px] bg-[#b5673a]" />
      </div>
    </div>
  );
}
